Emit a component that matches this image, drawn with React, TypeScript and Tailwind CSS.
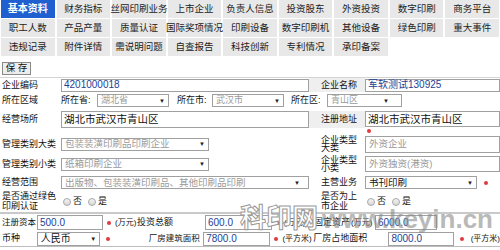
const tabs = [
  '基本资料', '财务指标', '丝网印刷业务', '上市企业', '负责人信息', '投资股东', '外资投资', '数字印刷', '商务平台',
  '职工人数', '产品产量', '质量认证', '国际奖项情况', '印刷设备', '数字印刷机', '其他设备', '绿色印刷', '重大事件',
  '违规记录', '附件详情', '需说明问题', '自查报告', '科技创新', '专利情况', '承印备案',
];

function Dot() {
  return <span className="inline-block w-[4px] h-[4px] rounded-full bg-[#e0393e]" />;
}

function Radio({ label }: { label: string }) {
  return (
    <span className="flex items-center gap-[2px] mr-[6px]">
      <span className="w-[8px] h-[8px] rounded-full border border-[#a8a8a8] bg-gradient-to-b from-[#f4f4f4] to-[#d8d8d8]" />
      <span>{label}</span>
    </span>
  );
}

function Arrow() {
  return <span className="text-[6px] text-[#222] leading-none">▼</span>;
}

export default function App() {
  return (
    <div className="relative w-[500px] h-[250px] overflow-hidden bg-white text-[#111] font-['Liberation_Sans','Noto_Sans_CJK_SC',sans-serif] text-[9px] leading-none">
      {/* tabs */}
      <div className="grid grid-cols-9 gap-x-[2px] gap-y-[1px] px-[1px]">
        {tabs.map((t, i) => (
          <div
            key={t}
            className={
              i === 0
                ? 'h-[18px] flex items-center justify-center bg-[#1f5fd0] text-white font-bold text-[10px] whitespace-nowrap'
                : 'h-[18px] flex items-center justify-center bg-[#e8e8e8] text-[#222] text-[9.5px] whitespace-nowrap'
            }
          >
            {t}
          </div>
        ))}
      </div>

      {/* save */}
      <div className="h-[21px] flex items-center pl-[2px] pt-[3px]">
        <button className="h-[13px] w-[29px] border border-[#8a8a8a] bg-[#ededed] text-[9.5px] flex items-center justify-center">保 存</button>
      </div>

      <div className="border-t border-[#d4d4d4]">
        {/* 企业编码 */}
        <div className="h-[14px] flex items-center">
          <div className="w-[61px] pl-[2px] whitespace-nowrap">企业编码</div>
          <div className="w-[248px] h-[13px] border border-[#a0a0a0] flex items-center px-[2px] text-[10px] text-[#1c3f94]">4201000018</div>
          <div className="w-[56px] h-full bg-[#efefef] pl-[12px] flex items-center whitespace-nowrap">企业名称</div>
          <div className="flex-1 h-[13px] border border-[#a0a0a0] flex items-center px-[2px] text-[10px] text-[#1c3f94]">军软测试130925</div>
        </div>

        {/* 所在区域 */}
        <div className="h-[17px] flex items-center">
          <div className="w-[61px] pl-[2px] whitespace-nowrap">所在区域</div>
          <div className="w-[36px] whitespace-nowrap">所在省:</div>
          <div className="w-[72px] h-[13px] border border-[#a0a0a0] flex items-center justify-between px-[3px] text-[#9a9a9a]">
            湖北省 <Arrow />
          </div>
          <div className="w-[35px] ml-[8px] whitespace-nowrap">所在市:</div>
          <div className="w-[72px] h-[13px] border border-[#a0a0a0] flex items-center justify-between px-[3px] text-[#9a9a9a]">
            武汉市 <Arrow />
          </div>
          <div className="w-[36px] ml-[7px] whitespace-nowrap">所在区:</div>
          <div className="w-[75px] h-[13px] border border-[#a0a0a0] flex items-center justify-between pl-[3px] pr-[12px] text-[#9a9a9a]">
            青山区 <Arrow />
          </div>
        </div>

        {/* 经营场所 */}
        <div className="h-[25px] flex items-start pt-[2px]">
          <div className="w-[61px] h-[17px] pl-[2px] flex items-center whitespace-nowrap">经营场所</div>
          <div className="w-[248px] h-[17px] border border-[#a0a0a0] flex items-center px-[2px] text-[10.5px]">湖北市武汉市青山区</div>
          <div className="w-[56px] h-[17px] bg-[#efefef] pl-[12px] flex items-center whitespace-nowrap">注册地址</div>
          <div className="flex-1 flex flex-col">
            <div className="h-[16px] border border-[#a0a0a0] flex items-center px-[2px] text-[10.5px]">湖北市武汉市青山区</div>
            <div className="pl-[2px] pt-[2px] flex"><Dot /></div>
          </div>
        </div>

        {/* 管理类别大类 */}
        <div className="h-[20px] flex items-center">
          <div className="w-[61px] pl-[2px] whitespace-nowrap">管理类别大类</div>
          <div className="w-[148px] h-[13px] border border-[#a0a0a0] flex items-center justify-between px-[3px] text-[9.5px] text-[#9a9a9a]">
            包装装潢印刷品印刷企业 <Arrow />
          </div>
          <div className="w-[100px]" />
          <div className="w-[56px] pl-[12px] leading-[8px]">企业类型<br />大类</div>
          <div className="flex-1 h-[17px] border border-[#a0a0a0] flex items-center px-[3px] text-[9.5px] text-[#9a9a9a]">外资企业</div>
        </div>

        {/* 管理类别小类 */}
        <div className="h-[20px] flex items-center">
          <div className="w-[61px] pl-[2px] whitespace-nowrap">管理类别小类</div>
          <div className="w-[148px] h-[13px] border border-[#a0a0a0] flex items-center justify-between px-[3px] text-[9.5px] text-[#9a9a9a]">
            纸箱印刷企业 <Arrow />
          </div>
          <div className="w-[100px]" />
          <div className="w-[56px] pl-[12px] leading-[8px]">企业类型<br />小类</div>
          <div className="flex-1 h-[16px] border border-[#a0a0a0] flex items-center px-[3px] text-[9.5px] text-[#9a9a9a]">外资独资(港资)</div>
        </div>

        {/* 经营范围 */}
        <div className="h-[17px] flex items-center">
          <div className="w-[61px] pl-[2px] whitespace-nowrap">经营范围</div>
          <div className="w-[248px] h-[13px] border border-[#a0a0a0] flex items-center justify-between pl-[3px] pr-[8px] text-[9.5px] text-[#9a9a9a]">
            出版物、包装装潢印刷品、其他印刷品印刷 <Arrow />
          </div>
          <div className="w-[56px] pl-[12px] whitespace-nowrap">主营业务</div>
          <div className="w-[112px] h-[13px] border border-[#a0a0a0] flex items-center justify-between px-[3px] text-[9.5px]">
            书刊印刷 <Arrow />
          </div>
          <div className="ml-[7px] flex"><Dot /></div>
        </div>

        {/* radios */}
        <div className="h-[21px] flex items-center">
          <div className="w-[61px] pl-[2px] leading-[9.5px] whitespace-nowrap">是否通过绿色<br />印刷认证</div>
          <div className="w-[248px] flex items-center pl-[2px]">
            <Radio label="否" />
            <Radio label="是" />
          </div>
          <div className="w-[56px] pl-[12px] leading-[9.5px] whitespace-nowrap">是否为上<br />市企业</div>
          <div className="flex items-center pl-[2px]">
            <Radio label="否" />
            <Radio label="是" />
          </div>
        </div>

        <div className="h-[2px] bg-[#c9c9c9]" />

        {/* 注册资本 */}
        <div className="h-[17px] flex items-center whitespace-nowrap">
          <div className="w-[37px] pl-[2px] text-[8.5px]">注册资本</div>
          <div className="w-[66px] h-[15px] border border-[#a0a0a0] flex items-center px-[2px] text-[10px] text-[#1c3f94]">500.0</div>
          <div className="w-[12px] flex justify-center"><Dot /></div>
          <div className="w-[22px] text-[8px]">(万元)</div>
          <div className="w-[68px]">投资总额</div>
          <div className="w-[67px] h-[15px] border border-[#a0a0a0] flex items-center px-[2px] text-[10px] text-[#1c3f94]">600.0</div>
          <div className="w-[12px] flex justify-center"><Dot /></div>
          <div className="w-[22px] text-[8px]">(万元)</div>
          <div className="w-[8px]" />
          <div className="w-[37px]">固定资产</div>
          <div className="w-[24px] text-[8px]">(万元)</div>
          <div className="w-[62px] h-[15px] border border-[#a0a0a0] flex items-center px-[2px] text-[10px] text-[#1c3f94]">6000.0</div>
        </div>

        {/* 币种 */}
        <div className="h-[16px] flex items-center whitespace-nowrap border-b border-[#bdbdbd]">
          <div className="w-[37px] pl-[2px]">币种</div>
          <div className="w-[64px] h-[14px] border border-[#a0a0a0] flex items-center justify-between px-[3px] text-[10px]">
            人民币 <Arrow />
          </div>
          <div className="w-[16px] flex justify-center"><Dot /></div>
          <div className="w-[33px]" />
          <div className="w-[55px] text-[8.5px]">厂房建筑面积</div>
          <div className="w-[67px] h-[14px] border border-[#a0a0a0] flex items-center px-[2px] text-[10px] text-[#1c3f94]">7800.0</div>
          <div className="w-[13px] flex justify-center"><Dot /></div>
          <div className="w-[31px] text-[8px]">(平方米)</div>
          <div className="w-[76px]">厂房占地面积</div>
          <div className="w-[66px] h-[14px] border border-[#a0a0a0] flex items-center px-[2px] text-[10px] text-[#1c3f94]">8000.0</div>
          <div className="w-[17px] flex justify-center"><Dot /></div>
          <div className="text-[8px]">(平方米)</div>
        </div>
      </div>

      {/* watermark */}
      <div className="absolute left-[240px] top-[206px] flex items-end gap-[4px] pointer-events-none">
        <span className="text-[26px] font-bold font-['Liberation_Serif','Noto_Sans_CJK_SC',serif] text-white [-webkit-text-stroke:1px_#9a9a9a] leading-none">科印网</span>
        <span className="text-[26px] font-bold text-[#8c8c8c] opacity-60 leading-none">www.keyin.cn</span>
      </div>
    </div>
  );
}
